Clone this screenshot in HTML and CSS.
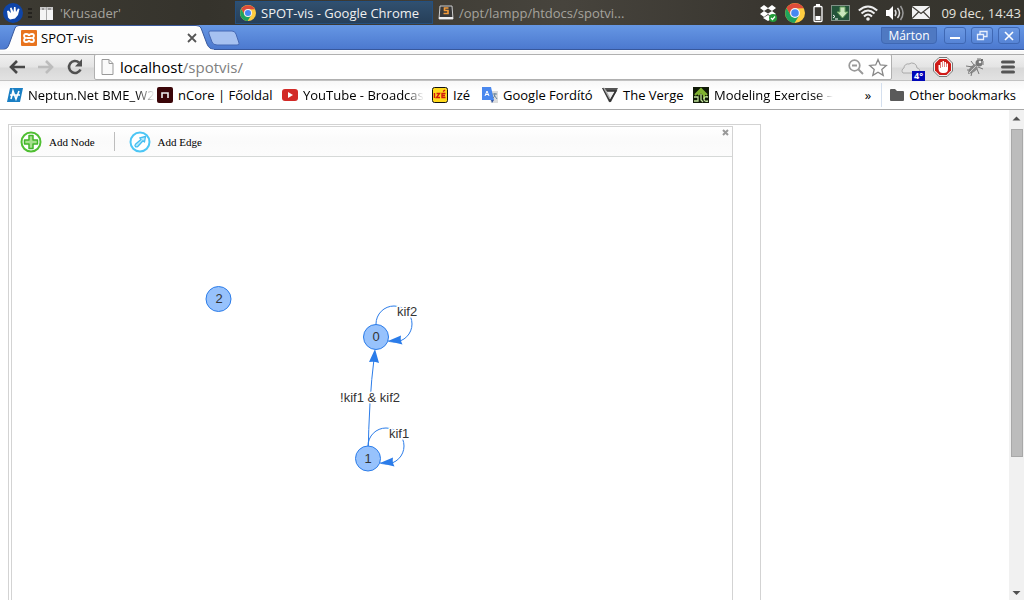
FILE: index.html
```html
<!DOCTYPE html>
<html lang="en">
<head>
<meta charset="utf-8">
<title>SPOT-vis</title>
<link rel="stylesheet" href="styles.css">
</head>
<body>
<header class="panel">
  <button class="launcher" aria-label="Applications">
    <svg width="20" height="20" viewBox="0 0 20 20"><circle cx="10" cy="10" r="10" fill="#0f45a8"/><path d="M4 8l1.500-.5L8 10 7 5l1.500-.5L10.500 9l.5-5h1.500l.5 5 2-3.500 1.500.5-1.500 6-3 3.500-5 1-2-2z" fill="#fff"/></svg>
  </button>
  <span class="grip"></span>
  <button class="task task-krusader">
    <svg width="16" height="16" viewBox="0 0 16 16"><path d="M1 2h13v13H1z" fill="#f4f4f4"/><path d="M1 2h13v3H1z" fill="#c9c9c9"/><path d="M7.500 2v13" stroke="#aaa"/><path d="M3 4h2M9 4h3" stroke="#666"/></svg>
    <span>'Krusader'</span>
  </button>
  <button class="task task-active">
    <svg width="16" height="16" viewBox="0 0 20 20"><use href="#chrome"/></svg>
    <span>SPOT-vis - Google Chrome</span>
  </button>
  <button class="task task-editor">
    <svg width="16" height="16" viewBox="0 0 16 16"><path d="M2 1h12l1 13H1z" fill="#383838" stroke="#ccc"/><path d="M1 12h14v2H1z" fill="#eee"/><path d="M10.500 3H6.500v2.500h3.500V8.500H5.500" fill="none" stroke="#f29a38" stroke-width="1.600"/></svg>
    <span>/opt/lampp/htdocs/spotvi...</span>
  </button>
  <div class="tray">
    <svg width="18" height="18" viewBox="0 0 18 18"><path d="M1 4l4-3 4 3 4-3 4 3-4 3 4 3-4 3-4-3-4 3-4-3 4-3z" fill="#fff"/><path d="M5 7l4-2.500L13 7 9 9.500z" fill="#403d37"/><path d="M4 14l5-3 5 3-5 3z" fill="#fff"/><circle cx="14" cy="14" r="4" fill="#239b39"/><path d="M12 14l1.500 1.500L16 12.500" fill="none" stroke="#fff" stroke-width="1.200"/></svg>
    <svg width="20" height="20" viewBox="0 0 20 20">
      <defs><g id="chrome"><circle cx="10" cy="10" r="10" fill="#ffcd40"/><path d="M1.500 5A10 10 0 0 1 18.700 5.200L10 5.500 5.500 12z" fill="#dd4b3a"/><path d="M1.500 5A10 10 0 0 0 9.500 20L14.200 12.500 10 14.500 5.800 12.400z" fill="#1fa35c"/><circle cx="10" cy="10" r="5" fill="#f4f4f4"/><circle cx="10" cy="10" r="3.800" fill="#4688f1"/></g></defs>
      <use href="#chrome"/></svg>
    <svg width="10" height="20" viewBox="0 0 10 20"><rect x="1" y="3.500" width="8" height="15" rx="1" fill="none" stroke="#fff" stroke-width="1.300"/><path d="M3 1h4v2H3zM2.500 13h5v4h-5z" fill="#fff"/></svg>
    <svg width="19" height="16" viewBox="0 0 19 16"><rect x=".5" y=".5" width="18" height="15" fill="#24543a" stroke="#829187"/><path d="M9 2h5v5h3l-5.500 6L6 7h3z" fill="#c9e6bd" stroke="#6ba360"/><path d="M2 10l2 1.500L2 13M4 14h3" fill="none" stroke="#fff"/></svg>
    <svg width="20" height="16" viewBox="0 0 20 16"><g fill="none" stroke="#eee" stroke-width="2"><path d="M.8 5.500Q10-2.500 19.200 5.500M3.500 8.500Q10 2.500 16.500 8.500M6 11.500Q10 7.500 14 11.500"/></g><circle cx="10" cy="14" r="1.800" fill="#eee"/></svg>
    <svg width="18" height="16" viewBox="0 0 18 16"><path d="M0 5h3l4-4v14l-4-4H0z" fill="#fff"/><g fill="none" stroke="#ddd" stroke-width="1.500"><path d="M9 5q2 3 0 6M11.500 3q4 5 0 10"/><path d="M14.500 1q5 7 0 14" stroke="#999"/></g></svg>
    <svg width="18" height="13" viewBox="0 0 18 13"><path d="M0 0h18v13H0z" fill="#f2f2f2"/><path d="M0 .5l9 7 9-7M0 12.500L6.500 6M18 12.500L11.500 6" fill="none" stroke="#403d37" stroke-width="1.200"/></svg>
  </div>
  <time class="clock">09 dec, 14:43</time>
</header>

<div class="tabstrip">
  <div class="tab">
    <svg class="tab-shape" width="240" height="25" viewBox="0 0 240 25"><path d="M0 24.500h3c3 0 5-2 6-5L15 3q1-2.500 4-2.500h177q4 0 5 2.500l6 16q2 5 7 5.500v1H0z" fill="#fdfdfd" stroke="#38589c"/><path d="M210 6h22q3 0 4 3l3 9q1 2-2 2h-20q-4 0-5-3l-3-8q-1-3 1-3z" fill="#a6c1f0" stroke="#4568b4"/><path d="M0 25h214" stroke="#fdfdfd"/></svg>
    <svg class="tab-icon" width="16" height="16" viewBox="0 0 16 16"><rect width="16" height="16" rx="1" fill="#e8731d"/><path d="M5 4q3 0 3 2 0-2 3-2 2 0 2 2 0 1-1.500 2Q13 9 13 10q0 2-2 2-3 0-3-2 0 2-3 2-2 0-2-2 0-1 1.500-2Q3 7 3 6q0-2 2-2zM5.500 8h5" fill="none" stroke="#fff" stroke-width="1.800"/></svg>
    <span class="tab-title">SPOT-vis</span>
    <button class="tab-close" aria-label="Close tab"><svg width="10" height="10" viewBox="0 0 10 10"><path d="M1 1l8 8M9 1L1 9" stroke="#555" stroke-width="1.800"/></svg></button>
  </div>
  <div class="window-buttons">
    <button class="user">Márton</button>
    <button class="win" aria-label="Minimize"><svg width="12" height="12" viewBox="0 0 12 12"><path d="M1 8h10" stroke="#fff" stroke-width="2"/></svg></button>
    <button class="win" aria-label="Restore"><svg width="12" height="12" viewBox="0 0 12 12"><path d="M4 4V1.500h7v5H8M1.500 4.500h6v5h-6z" fill="none" stroke="#e8effc" stroke-width="1.300"/></svg></button>
    <button class="win" aria-label="Close"><svg width="12" height="12" viewBox="0 0 12 12"><path d="M2 2l8 8M10 2l-8 8" stroke="#fff" stroke-width="1.600"/></svg></button>
  </div>
</div>

<nav class="toolbar">
  <div class="nav-buttons">
    <button aria-label="Back"><svg width="18" height="16" viewBox="0 0 18 16"><path d="M17 8H4M9 2L3 8l6 6" fill="none" stroke="#484848" stroke-width="2.600"/></svg></button>
    <button aria-label="Forward"><svg width="18" height="16" viewBox="0 0 18 16"><path d="M1 8h13M9 2l6 6-6 6" fill="none" stroke="#bcbcbc" stroke-width="2.600"/></svg></button>
    <button aria-label="Reload"><svg width="18" height="16" viewBox="0 0 18 16"><path d="M14.500 10.500A6 6 0 1 1 13 3.500" fill="none" stroke="#505050" stroke-width="2.600"/><path d="M16 0v7.500H9z" fill="#505050"/></svg></button>
  </div>
  <div class="omnibox">
    <svg width="13" height="16" viewBox="0 0 13 16"><path d="M1 .5h7l4 4v11H1zM8 .5v4h4" fill="#fafafa" stroke="#999"/></svg>
    <div class="url">localhost<span>/spotvis/</span></div>
    <button aria-label="Zoom"><svg width="16" height="16" viewBox="0 0 16 16"><circle cx="6.500" cy="6.500" r="5.300" fill="none" stroke="#999" stroke-width="1.700"/><path d="M4 6.500h5M10.500 10.500l4.500 4.500" stroke="#999" stroke-width="1.900"/></svg></button>
    <button aria-label="Bookmark this page"><svg width="20" height="19" viewBox="0 0 20 19"><path d="M10 1.500l2.300 5.400 6 .5-4.500 4 1.400 6-5.200-3.200-5.200 3.200 1.400-6-4.500-4 6-.5z" fill="#fff" stroke="#888" stroke-width="1.300"/></svg></button>
  </div>
  <div class="extensions">
    <button class="weather" aria-label="Weather"><svg width="20" height="13" viewBox="0 0 20 13"><path d="M2 12a3 3 0 0 1 1-5 4 4 0 0 1 5-4 5 5 0 0 1 8 4 3 3 0 0 1 2 5z" fill="#e3e3e3" stroke="#aaa"/></svg><span class="badge">4°</span></button>
    <button aria-label="Ad blocker"><svg width="20" height="20" viewBox="0 0 20 20"><path d="M6 .5h8L19.500 6v8L14 19.500H6L.5 14V6z" fill="#f3f3f3" stroke="#777"/><path d="M6.500 2h7L18 6.500v7L13.500 18h-7L2 13.500v-7z" fill="#cf1a17"/><path d="M5.500 8H7v3h.6V5H9v5h.5V4H11v6h.5V5H13v5h.5V6.500H15V12q0 4-4 4H9.500Q6 16 5.500 12z" fill="#fff"/></svg></button>
    <button aria-label="Debugger"><svg width="20" height="20" viewBox="0 0 20 20"><path d="M3 17q0-7 7-10l3 4q-3 5-10 6z" fill="#8a8a8a"/><path d="M4 16l7-7" stroke="#ccc"/><circle cx="14" cy="6" r="3.500" fill="#777"/><path d="M1 9l7 1M2 13h4M6 19l1-4M6 4l3 4M14 17l-2-5M18 12l-5-2M12 2h4M18 4v4" fill="none" stroke="#777"/><circle cx="15" cy="5" r="1.300" fill="#eee"/><circle cx="17" cy="3" r="1" fill="#444"/></svg></button>
    <button class="menu" aria-label="Menu"><svg width="14" height="14" viewBox="0 0 14 14"><path d="M1.500 2h11M1.500 7h11M1.500 12h11" stroke="#555" stroke-width="3" stroke-linecap="round"/></svg></button>
  </div>
</nav>

<nav class="bookmarks">
  <a href="#" class="bm bm-long"><svg width="16" height="16" viewBox="0 0 16 16"><path d="M3 1h13l-3 14H0z" fill="#1a7fc4"/><path d="M4 12L6 4l3 8 3-8M3 8h10" fill="none" stroke="#fff" stroke-width="1.600"/></svg><span class="fade">Neptun.Net BME_W2</span></a>
  <a href="#" class="bm bm-ncore"><svg width="16" height="16" viewBox="0 0 16 16"><rect width="16" height="16" rx="2" fill="#3a0508"/><path d="M5 11V6h6v5" fill="none" stroke="#eee" stroke-width="1.600"/></svg><span>nCore | Főoldal</span></a>
  <a href="#" class="bm bm-long"><svg width="16" height="16" viewBox="0 0 16 16"><rect y="2" width="16" height="12" rx="3" fill="#d22a27"/><path d="M6 5l5 3-5 3z" fill="#fff"/></svg><span class="fade">YouTube - Broadcas</span></a>
  <a href="#" class="bm bm-ize"><svg width="16" height="16" viewBox="0 0 16 16"><rect x=".5" y=".5" width="15" height="15" rx="2" fill="#ffd91c" stroke="#111"/><path d="M2.500 6v5M4.500 6.500h3l-3 4h3.500M13.500 6.500H10v4h3.500M10 8.500h3M11 4.500l2-1.500" fill="none" stroke="#d3180d" stroke-width="1.400"/></svg><span>Izé</span></a>
  <a href="#" class="bm bm-google"><svg width="16" height="16" viewBox="0 0 16 16"><path d="M6 4h10v12H9z" fill="#ddd"/><path d="M0 0h9l3 13H0z" fill="#4a88ee"/><path d="M9 13h3l-2 3z" fill="#3157a4"/><path d="M3 9l2-5 2 5M3.500 7.500h3" fill="none" stroke="#fff"/><path d="M10.500 7H15M13 6q0 4-2 5M12 8l3 4" fill="none" stroke="#68839b"/></svg><span>Google Fordító</span></a>
  <a href="#" class="bm bm-verge"><svg width="16" height="16" viewBox="0 0 16 16"><path d="M0 1h16L9 15H7z" fill="#555"/><path d="M4 4h9L8 13z" fill="#eee"/><path d="M1 1l7 13L14 4H5" fill="none" stroke="#333" stroke-width="1.500"/><path d="M2 1l6 11" stroke="#aaa" stroke-width="1.500"/></svg><span>The Verge</span></a>
  <a href="#" class="bm bm-long"><svg width="16" height="16" viewBox="0 0 16 16"><path d="M0 0h16v16H0z" fill="#101a08"/><path d="M2 8l6-6 6 6M5 8l3-3 3 3v4" fill="none" stroke="#82b532" stroke-width="2"/><path d="M1 10h4v4H1M8 7v6l2 2M15 10q-4-1-4 2t4 2" fill="none" stroke="#c1e39a" stroke-width="1.300"/></svg><span class="fade">Modeling Exercise –</span></a>
  <button class="overflow" aria-label="More bookmarks">»</button>
  <a href="#" class="bm other"><svg width="16" height="16" viewBox="0 0 16 16"><path d="M1 3q0-1 1-1h4l2 2h6q1 0 1 1v8q0 1-1 1H2q-1 0-1-1z" fill="#5a5a5a"/></svg><span>Other bookmarks</span></a>
</nav>

<div class="viewport">
  <main class="page">
    <div class="outer">
      <div class="network">
        <div class="manipulation">
          <button class="tool"><svg width="22" height="22" viewBox="0 0 22 22"><circle cx="11" cy="11" r="9.500" fill="#fff" stroke="#4fbf32" stroke-width="2"/><path d="M9 4.500h4V9h4.500v4H13v4.500H9V13H4.500V9H9z" fill="#a6e08d" stroke="#42b529" stroke-width="1.500" stroke-linejoin="round"/></svg><span>Add Node</span></button>
          <span class="separator"></span>
          <button class="tool"><svg width="22" height="22" viewBox="0 0 22 22"><circle cx="11" cy="11" r="9.500" fill="#fff" stroke="#4cc6f5" stroke-width="2"/><path d="M16.500 5.500l-1 5.500-1.500-1.300-5 5.500q-1.500 1.300-2.600.3t.3-2.600l5.300-4.400-1.200-1.700z" fill="#b8eafb" stroke="#45bdf0" stroke-width="1.300" stroke-linejoin="round"/></svg><span>Add Edge</span></button>
          <button class="close" aria-label="Close"><svg width="7" height="7" viewBox="0 0 7 7"><path d="M1 1l5 5M6 1L1 6" stroke="#999" stroke-width="2"/></svg></button>
        </div>
        <svg class="graph" width="720" height="443" viewBox="0 0 720 443">
          <g class="edge">
            <circle cx="382" cy="167" r="18"/>
            <circle cx="374" cy="289" r="18"/>
            <path d="M356 302Q357 240 362 202"/>
          </g>
          <g class="arrow">
            <path d="M376 184l13-5.500q-1 5 1.500 9z"/>
            <path d="M368 306l13-5.500q-1 5 1.500 9z"/>
            <path d="M363 192l4 14q-5-2-10-1z"/>
          </g>
          <g class="node">
            <circle cx="364" cy="180" r="12.500"/>
            <circle cx="356" cy="301.500" r="12.500"/>
            <circle cx="206.500" cy="142" r="12.500"/>
          </g>
          <g class="label">
            <text x="364" y="184">0</text>
            <text x="356" y="306">1</text>
            <text x="207" y="146">2</text>
          </g>
          <g class="label edge-label">
            <text x="395" y="159">kif2</text>
            <text x="387" y="281">kif1</text>
            <text x="358" y="245">!kif1 &amp; kif2</text>
          </g>
        </svg>
      </div>
    </div>
  </main>
  <div class="scrollbar">
    <svg width="15" height="19" viewBox="0 0 15 19"><path d="M3.500 10.500l4-4 4 4z" fill="#505050"/></svg>
    <div class="track"><div class="thumb"></div></div>
    <svg width="15" height="15" viewBox="0 0 15 15"><path d="M3.500 6l4 4 4-4z" fill="#505050"/></svg>
  </div>
</div>
</body>
</html>
```
FILE: styles.css
```css
* { box-sizing: border-box; }
body {
  margin: 0;
  height: 100vh;
  display: flex;
  flex-direction: column;
  overflow: hidden;
  background: #fff;
  color: #000;
  font: 13px "Open Sans", "Noto Sans", sans-serif;
}
button {
  display: flex;
  align-items: center;
  margin: 0;
  padding: 0;
  border: 0;
  background: none;
  color: inherit;
  font: inherit;
}
svg { display: block; flex: none; }
a { color: inherit; text-decoration: none; }

.panel {
  flex: none;
  display: flex;
  align-items: center;
  height: 25px;
  padding: 0 3px;
  background: linear-gradient(90deg, #3d3b33, #35332c 20%, #47443d 55%, #393630 75%, #35342d);
  color: #e4e2dc;
  white-space: nowrap;
}
.grip {
  width: 4px;
  height: 10px;
  margin: 0 7px 0 5px;
  background: repeating-linear-gradient(#24221e 0 2px, transparent 2px 4px);
}
.task { gap: 5px; height: 23px; color: #a5a39d; }
.task-krusader { width: 196px; }
.task-active {
  width: 198px;
  padding: 0 4px;
  border: 1px solid #245080;
  background: linear-gradient(#31506f, #263f59);
  color: #f0f0f0;
}
.task-editor { padding-left: 5px; }
.tray { display: flex; align-items: center; gap: 8px; margin-left: auto; }
.clock { margin-left: 11px; }

.tabstrip {
  flex: none;
  display: flex;
  justify-content: space-between;
  height: 25px;
  background: linear-gradient(#6697e4, #4c79cf);
  border-bottom: 1px solid #38589c;
}
.tab {
  position: relative;
  display: flex;
  align-items: center;
  gap: 4px;
  width: 240px;
  height: 25px;
  padding: 0 43px 0 21px;
}
.tab-shape { position: absolute; left: 0; top: 0; }
.tab-icon, .tab-title, .tab-close { position: relative; }
.tab-close { margin-left: auto; }
.window-buttons { display: flex; gap: 5px; padding: 2px 4px 0 0; color: #fff; }
.user, .win {
  justify-content: center;
  height: 17px;
  border: 1px solid #3f68b4;
  border-radius: 3px;
  background: linear-gradient(#6b98e2, #5684d6);
}
.user { width: 56px; margin-right: 2px; border-radius: 0 0 4px 4px; background: #4f79c2; font-size: 12px; }
.win { width: 22px; }

.toolbar {
  flex: none;
  display: flex;
  align-items: center;
  height: 31px;
  padding-top: 3px;
  border-top: 1px solid #fff;
  background: linear-gradient(#f8f8f8 0 3px, #aaa 3px 4px, #f0f0f0 4px, #e4e4e4 16px, #d8d8d8 17px, #e2e2e2);
  border-bottom: 1px solid #c2c2c2;
}
.nav-buttons { display: flex; gap: 11px; padding: 0 10px 0 8px; }
.omnibox {
  flex: 1;
  display: flex;
  align-items: center;
  height: 26px;
  padding: 0 3px 0 6px;
  border: 1px solid #b0b0b0;
  border-radius: 2px;
  background: #fff;
  font-size: 15px;
}
.url { flex: 1; padding-left: 6px; }
.url span { color: #808080; }
.omnibox button + button { margin-left: 4px; }
.extensions { display: flex; align-items: center; gap: 12px; padding: 0 9px; }
.menu { margin-left: 4px; }
.weather { position: relative; width: 20px; height: 22px; }
.badge {
  position: absolute;
  right: -4px;
  bottom: -3px;
  padding: 0 2px;
  background: #0007b8;
  color: #fff;
  font-size: 9px;
  font-weight: bold;
  line-height: 10px;
}

.bookmarks {
  flex: none;
  display: flex;
  align-items: center;
  gap: 12px;
  height: 29px;
  padding: 0 8px 0 7px;
  border-bottom: 1px solid #a8a8a8;
  background: linear-gradient(#f7f7f7, #fff 10px);
  white-space: nowrap;
}
.bm { display: flex; align-items: center; gap: 5px; }
.bm-long { width: 138px; }
.bm-ncore { width: 113px; }
.bm-ize { width: 38px; }
.bm-google { width: 108px; }
.bm-verge { width: 79px; }
.fade { mask-image: linear-gradient(90deg, #000 85%, transparent); }
.overflow { margin-left: auto; }
.other { margin-left: -2px; padding-left: 7px; height: 24px; gap: 4px; border-left: 1px solid #d4dfee; }

.viewport { flex: 1; display: flex; min-height: 0; }
.page { flex: 1; min-width: 0; overflow: hidden; padding: 14px 8px 0; }
.outer { max-width: 753px; height: 600px; padding: 1px 2px; border: 1px solid #d3d3d3; }
.network { max-width: 722px; height: 596px; border: 1px solid #d3d3d3; }
.manipulation {
  display: flex;
  align-items: center;
  height: 30px;
  padding: 0 3px 0 8px;
  border-bottom: 1px solid #d6d9d8;
  background: linear-gradient(#fff, #fafafa 50%, #fcfcfc);
  font-family: "Liberation Serif", serif;
  font-size: 11px;
}
.tool { gap: 7px; }
.separator { width: 1px; height: 19px; margin: 0 14px 0 19px; background: #bdbdbd; }
.close { align-self: flex-start; margin: 2px 0 0 auto; }
.edge { fill: none; stroke: #2b7ce9; }
.arrow { fill: #2b7ce9; }
.node { fill: #97c2fc; stroke: #2b7ce9; }
.label {
  fill: #343434;
  font: 13px "Liberation Sans", sans-serif;
  text-anchor: middle;
}
.edge-label { stroke: #fff; stroke-width: 3px; paint-order: stroke; }

.scrollbar { width: 15px; display: flex; flex-direction: column; background: #f1f1f1; }
.track { flex: 1; padding: 0 1px 0 2px; }
.thumb { height: 72%; border: 1px solid #a8a8a8; background: #bcbcbc; }
```
